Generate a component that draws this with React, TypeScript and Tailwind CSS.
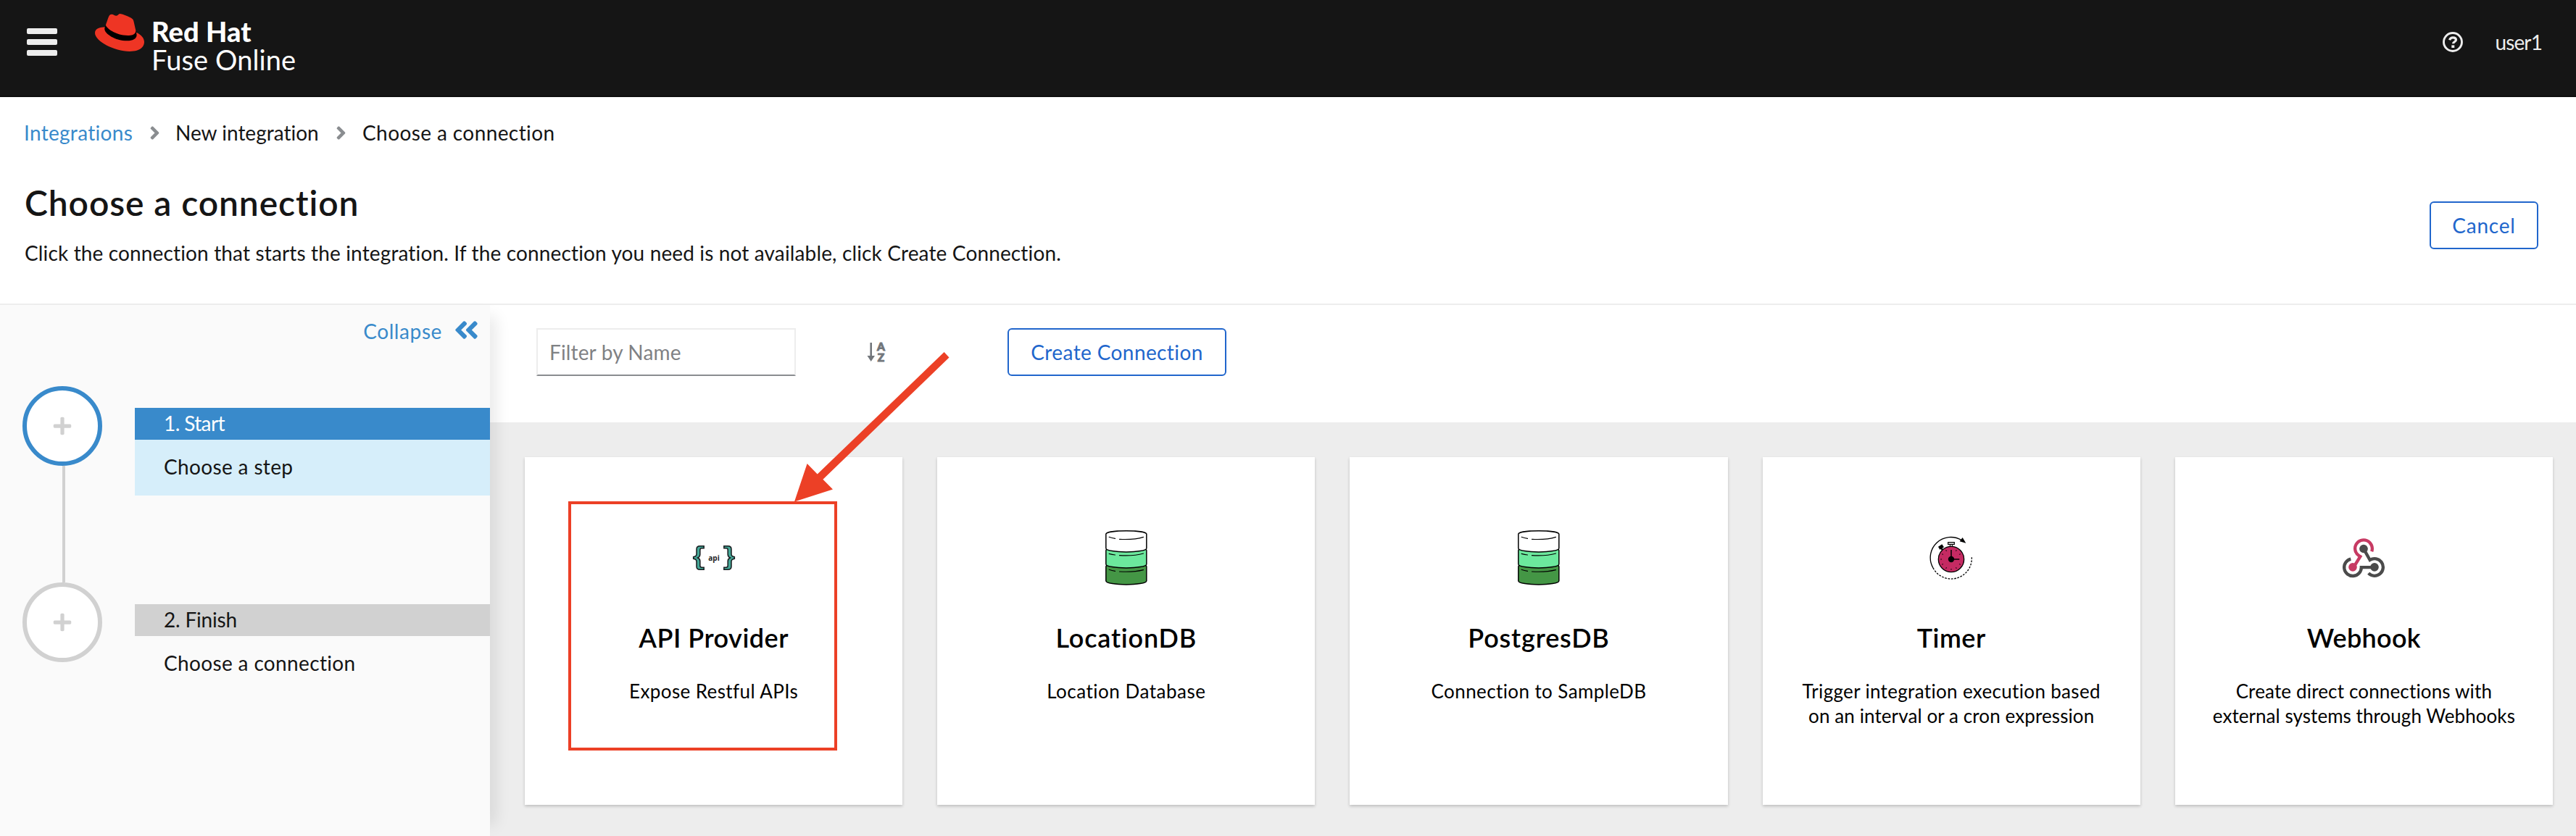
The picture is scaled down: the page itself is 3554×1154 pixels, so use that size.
import React from "react";
import { FaAngleDoubleLeft, FaAngleRight, FaPlus } from "react-icons/fa";

function Fedora() {
  return (
    <svg viewBox="0 2.9 24 18.2" preserveAspectRatio="none" className="mt-[19px] h-[52px] w-[68px]">
      <path
        fill="#000"
        d="M20.11 11.951c.218 1.032.218 1.14.218 1.277 0 1.765-1.984 2.745-4.593 2.745-5.895.004-11.06-3.451-11.06-5.734a2.326 2.326 0 0 1 .19-.925L5.4 8.4 19.8 11Z"
      />
      <path
        fill="#ee3524"
        d="M16.009 13.386c1.577 0 3.86-.326 3.86-2.202a1.765 1.765 0 0 0-.04-.431l-.94-4.08c-.216-.898-.406-1.305-1.982-2.093-1.223-.625-3.888-1.658-4.676-1.658-.733 0-.947.946-1.822.946-.842 0-1.467-.706-2.255-.706-.757 0-1.25.515-1.63 1.576 0 0-1.06 2.99-1.197 3.424a.81.81 0 0 0-.028.245c0 1.162 4.577 4.974 10.71 4.974m4.101-1.435c.218 1.032.218 1.14.218 1.277 0 1.765-1.984 2.745-4.593 2.745-5.895.004-11.06-3.451-11.06-5.734a2.326 2.326 0 0 1 .19-.925C2.746 9.415 0 9.794 0 12.217c0 3.969 9.405 8.861 16.851 8.861 5.71 0 7.149-2.582 7.149-4.62 0-1.605-1.387-3.425-3.887-4.512"
      />
    </svg>
  );
}

function HelpIcon() {
  return (
    <svg viewBox="0 0 28 28" className="size-7" fill="none" stroke="#ededed">
      <circle cx="14" cy="14" r="12.5" strokeWidth="2.9" />
      <path d="M9.6 11.2C10.3 8.9 12 7.8 14.2 7.8c2.500 0 4.300 1.300 4.300 3.300 0 2.600-4 2.700-4 5.100" strokeWidth="3.2" />
      <path d="M12.300 20.200h4" strokeWidth="3.600" />
    </svg>
  );
}

function SortIcon() {
  return (
    <svg viewBox="0 -6 32 40" className="h-10 w-8 overflow-visible" fill="#72767b" stroke="#72767b" strokeWidth="1">
      <path d="M4.400 1h2.600v18h4L5.700 27 .5 19h3.900z" stroke="none" />
      <text x="19.500" y="12" textAnchor="middle" fontFamily="Lato" fontWeight="900" fontSize="15.500">A</text>
      <text x="19.500" y="27" textAnchor="middle" fontFamily="Lato" fontWeight="900" fontSize="15.500">Z</text>
    </svg>
  );
}

function Brace() {
  return (
    <path
      fill="#45a797"
      stroke="#171b1e"
      strokeWidth="4.500"
      d="M213.500 101H197Q183 101 183 114V134Q183 144 170 146V154Q183 156 183 166V186Q183 199 197 199H213.500V189.500H205Q197.500 189.500 197.500 183V164Q197.500 154 188 150Q197.500 146 197.500 136V117Q197.500 110.500 205 110.500H213.500Z"
    />
  );
}

function ApiIcon() {
  return (
    <svg viewBox="165 90 180 120" className="h-10 w-[60px]">
      <Brace />
      <g transform="matrix(-1 0 0 1 510 0)">
        <Brace />
      </g>
      <text x="255" y="161" textAnchor="middle" fontFamily="Open Sans" fontWeight="700" fontSize="30" fill="#222">
        api
      </text>
    </svg>
  );
}

function DatabaseIcon() {
  return (
    <svg viewBox="130 60 185 240" className="h-20 w-[62px]" stroke="#000" strokeWidth="4.500" strokeLinecap="round">
      <path fill="#449645" d="M138 216C138 196 306 196 306 216V275C306 296 138 296 138 275Z" />
      <path fill="#6ce89d" d="M138 149C138 129 306 129 306 149V206C306 227 138 227 138 206Z" />
      <path fill="#fff" d="M138 82C138 64 306 64 306 82V140C306 161 138 161 138 140Z" />
      <g fill="none" strokeWidth="3.500">
        <path d="M151 94Q163 99 176 100M194 103Q255 106 293 94" />
        <path d="M151 163Q163 167 176 168M194 170Q255 173 293 162" />
        <path d="M151 229Q163 234 176 235M194 237Q255 240 293 230" />
      </g>
    </svg>
  );
}

const ticks = [30, 60, 120, 150, 180, 210, 240, 270, 300, 330];

function TimerIcon() {
  return (
    <svg viewBox="66 90 180 180" className="size-[60px]" fill="none" stroke="#000">
      <path d="M81 222A85 85 0 0 1 199 107" strokeWidth="4" />
      <path d="M81 222A85 85 0 0 0 241 178" strokeWidth="4" strokeDasharray="8 5" />
      <path d="M191 112L203 96L217 119Z" fill="#000" stroke="none" />
      <path d="M102 134L118 124L126 136L119 140L124 146L118 150L113 144L109 146Z" fill="#000" stroke="none" />
      <path d="M151 125h10v8h-10z" strokeWidth="3" fill="#fff" />
      <path d="M143 116h26v8h-26z" strokeWidth="3.500" fill="#fff" />
      <circle cx="156" cy="186" r="53" fill="#c52a62" strokeWidth="4" />
      {ticks.map((a) => (
        <path key={a} d="M156 142v5" strokeWidth="3" transform={`rotate(${a} 156 186)`} />
      ))}
      <path d="M156 186V147M156 186H190" strokeWidth="4.500" />
      <circle cx="156" cy="186" r="12.500" fill="#000" stroke="none" />
    </svg>
  );
}

function WebhookIcon() {
  return (
    <svg viewBox="93 65 180 170" className="h-[57px] w-[60px]" fill="none" strokeWidth="13">
      <path stroke="#c73a63" d="M216.500 122A35.500 35.500 0 1 0 164 140L169 143L140 190" />
      <circle cx="138" cy="187" r="17.500" fill="#c73a63" />
      <path stroke="#4b4b4b" d="M130 153.500A35.500 35.500 0 1 0 173.500 188H228" />
      <circle cx="228" cy="187" r="17.500" fill="#4b4b4b" />
      <path stroke="#4b4b4b" d="M203 212.500A35.500 35.500 0 1 0 209 157.500L183 111" />
      <circle cx="183" cy="111" r="17.500" fill="#4b4b4b" />
    </svg>
  );
}

type Card = { title: string; titleClass: string; lines: { text: string; cls: string }[]; icon: React.ReactNode };

const cards: Card[] = [
  {
    title: "API Provider",
    titleClass: "tracking-[0.5px]",
    lines: [{ text: "Expose Restful APIs", cls: "tracking-[0.4px]" }],
    icon: <ApiIcon />,
  },
  {
    title: "LocationDB",
    titleClass: "tracking-[0.8px]",
    lines: [{ text: "Location Database", cls: "tracking-[0.5px]" }],
    icon: <DatabaseIcon />,
  },
  {
    title: "PostgresDB",
    titleClass: "tracking-[0.8px]",
    lines: [{ text: "Connection to SampleDB", cls: "tracking-[0.4px]" }],
    icon: <DatabaseIcon />,
  },
  {
    title: "Timer",
    titleClass: "tracking-[0.5px]",
    lines: [
      { text: "Trigger integration execution based", cls: "tracking-[0.33px]" },
      { text: "on an interval or a cron expression", cls: "tracking-[0.1px]" },
    ],
    icon: <TimerIcon />,
  },
  {
    title: "Webhook",
    titleClass: "tracking-[0.3px]",
    lines: [
      { text: "Create direct connections with", cls: "tracking-[0.15px]" },
      { text: "external systems through Webhooks", cls: "tracking-[0.05px]" },
    ],
    icon: <WebhookIcon />,
  },
];

function ConnectionCard({ card }: { card: Card }) {
  return (
    <article className="flex h-[480px] flex-col items-center bg-white pt-[99px] text-center text-black shadow-[0_2px_4px_rgba(3,3,3,0.2)]">
      <div className="flex h-20 items-center justify-center">{card.icon}</div>
      <h2 className={`mt-[48px] text-[36px] leading-[44px] font-semibold whitespace-nowrap ${card.titleClass}`}>{card.title}</h2>
      <div className="mt-[35px] text-[26px] leading-[34px] whitespace-nowrap">
        {card.lines.map((l) => (
          <p key={l.text} className={l.cls}>
            {l.text}
          </p>
        ))}
      </div>
    </article>
  );
}

export default function App() {
  return (
    <div className="relative flex h-[1154px] w-[3554px] flex-col overflow-hidden bg-white font-['Lato',sans-serif] text-[28px] leading-[42px] text-[#151515]">
      <header className="flex h-[134px] shrink-0 items-start border-b-2 border-[#0e0e0e] bg-[#151515] pl-[37px]">
        <div className="mt-[39px] flex w-[42px] flex-col gap-[7px]">
          <span className="h-2 rounded-xs bg-[#ededed]" />
          <span className="h-2 rounded-xs bg-[#ededed]" />
          <span className="h-2 rounded-xs bg-[#ededed]" />
        </div>
        <div className="ml-[52px] flex">
          <Fedora />
          <div className="mt-6 ml-[10px] text-[38px] leading-[39px] whitespace-nowrap text-white">
            <div className="font-black tracking-[0.1px]">Red Hat</div>
            <div className="tracking-[0.1px]">Fuse Online</div>
          </div>
        </div>
        <div className="mt-[37px] mr-[47px] ml-auto flex items-center text-[#ededed]">
          <HelpIcon />
          <span className="ml-[45px] tracking-[-0.9px]">user1</span>
        </div>
      </header>

      <section className="flex h-[287px] shrink-0 items-start justify-between border-b-2 border-[#ededed] pr-[52px] pl-[33px] whitespace-nowrap">
        <div className="pt-7">
          <nav className="flex items-center">
            <a className="w-[150px] tracking-[0.3px] text-[#398acb]">Integrations</a>
            <FaAngleRight className="ml-[16px] size-[29px] text-[#8a8d90]" />
            <span className="ml-[14px] w-[198px] tracking-[0.01px]">New integration</span>
            <FaAngleRight className="ml-[16px] size-[29px] text-[#8a8d90]" />
            <span className="ml-[15px] tracking-[0.4px]">Choose a connection</span>
          </nav>
          <h1 className="mt-[45px] pl-px text-[48px] leading-[62px] font-semibold tracking-[0.9px]">Choose a connection</h1>
          <p className="mt-[17px] pl-px tracking-[0.14px]">
            Click the connection that starts the integration. If the connection you need is not available, click Create Connection.
          </p>
        </div>
        <button className="mt-36 h-[66px] w-[150px] rounded-md border-2 border-[#2166cc] pb-px tracking-[0.8px] text-[#2166cc]">Cancel</button>
      </section>

      <div className="flex min-h-0 flex-1">
        <aside className="z-10 flex w-[676px] shrink-0 flex-col bg-[#fafafa] whitespace-nowrap shadow-[24px_0_20px_-16px_rgba(3,3,3,0.09)]">
          <div className="flex h-[112px] items-start justify-end pt-[15px] pr-[13px] text-[#398acb]">
            <span className="tracking-[0.6px]">Collapse</span>
            <FaAngleDoubleLeft className="ml-[14px] size-[39px]" />
          </div>
          <div className="flex">
            <div className="flex w-[186px] flex-col pl-[31px]">
              <div className="flex size-[110px] items-center justify-center rounded-full border-[6px] border-[#398acb] bg-white">
                <FaPlus className="size-[28px] text-[#d1d1d1]" />
              </div>
              <div className="ml-[55px] h-[161px] w-1 bg-[#d1d1d1]" />
              <div className="flex size-[110px] items-center justify-center rounded-full border-[6px] border-[#d1d1d1] bg-white">
                <FaPlus className="size-[28px] text-[#d1d1d1]" />
              </div>
            </div>
            <div className="flex-1 pt-[30px]">
              <div className="h-11 bg-[#398acb] pl-10 leading-[43px] tracking-[-0.6px] text-white">1. Start</div>
              <div className="h-[77px] bg-[#d6eefa] pt-4 pl-10 tracking-[0.35px]">Choose a step</div>
              <div className="mt-[150px] h-11 bg-[#d1d1d1] pl-10 leading-[43px] tracking-[-0.2px]">2. Finish</div>
              <div className="pt-4 pl-10 tracking-[0.35px]">Choose a connection</div>
            </div>
          </div>
        </aside>

        <main className="flex flex-1 flex-col bg-[#ededed]">
          <div className="flex h-[162px] items-start bg-white pt-8 pl-16">
            <input
              placeholder="Filter by Name"
              className="h-[66px] w-[358px] border-2 border-[#ededed] border-b-[#8a8d90] bg-white px-4 pb-px tracking-[0.15px] outline-none placeholder:text-[#7f8184]"
            />
            <div className="ml-[98px] flex h-[66px] items-center">
              <SortIcon />
            </div>
            <button className="ml-[162px] h-[66px] w-[302px] rounded-md border-2 border-[#2166cc] pb-px tracking-[0.4px] text-[#2166cc]">
              Create Connection
            </button>
          </div>
          <div className="grid grid-cols-5 gap-12 pt-12 pr-8 pl-12">
            {cards.map((c) => (
              <ConnectionCard key={c.title} card={c} />
            ))}
          </div>
        </main>
      </div>

      <div className="absolute top-[692px] left-[784px] z-20 h-[344px] w-[371px] border-4 border-[#ec4026]" />
      <svg viewBox="1090 480 225 215" className="absolute top-[480px] left-[1090px] z-20 h-[215px] w-[225px]">
        <path
          fill="#ec4026"
          d="M1096 692.500L1113.600 640L1127.700 654.500L1302.600 486L1309.500 493.500L1135.400 661.800L1149 675.600Z"
        />
      </svg>
    </div>
  );
}
